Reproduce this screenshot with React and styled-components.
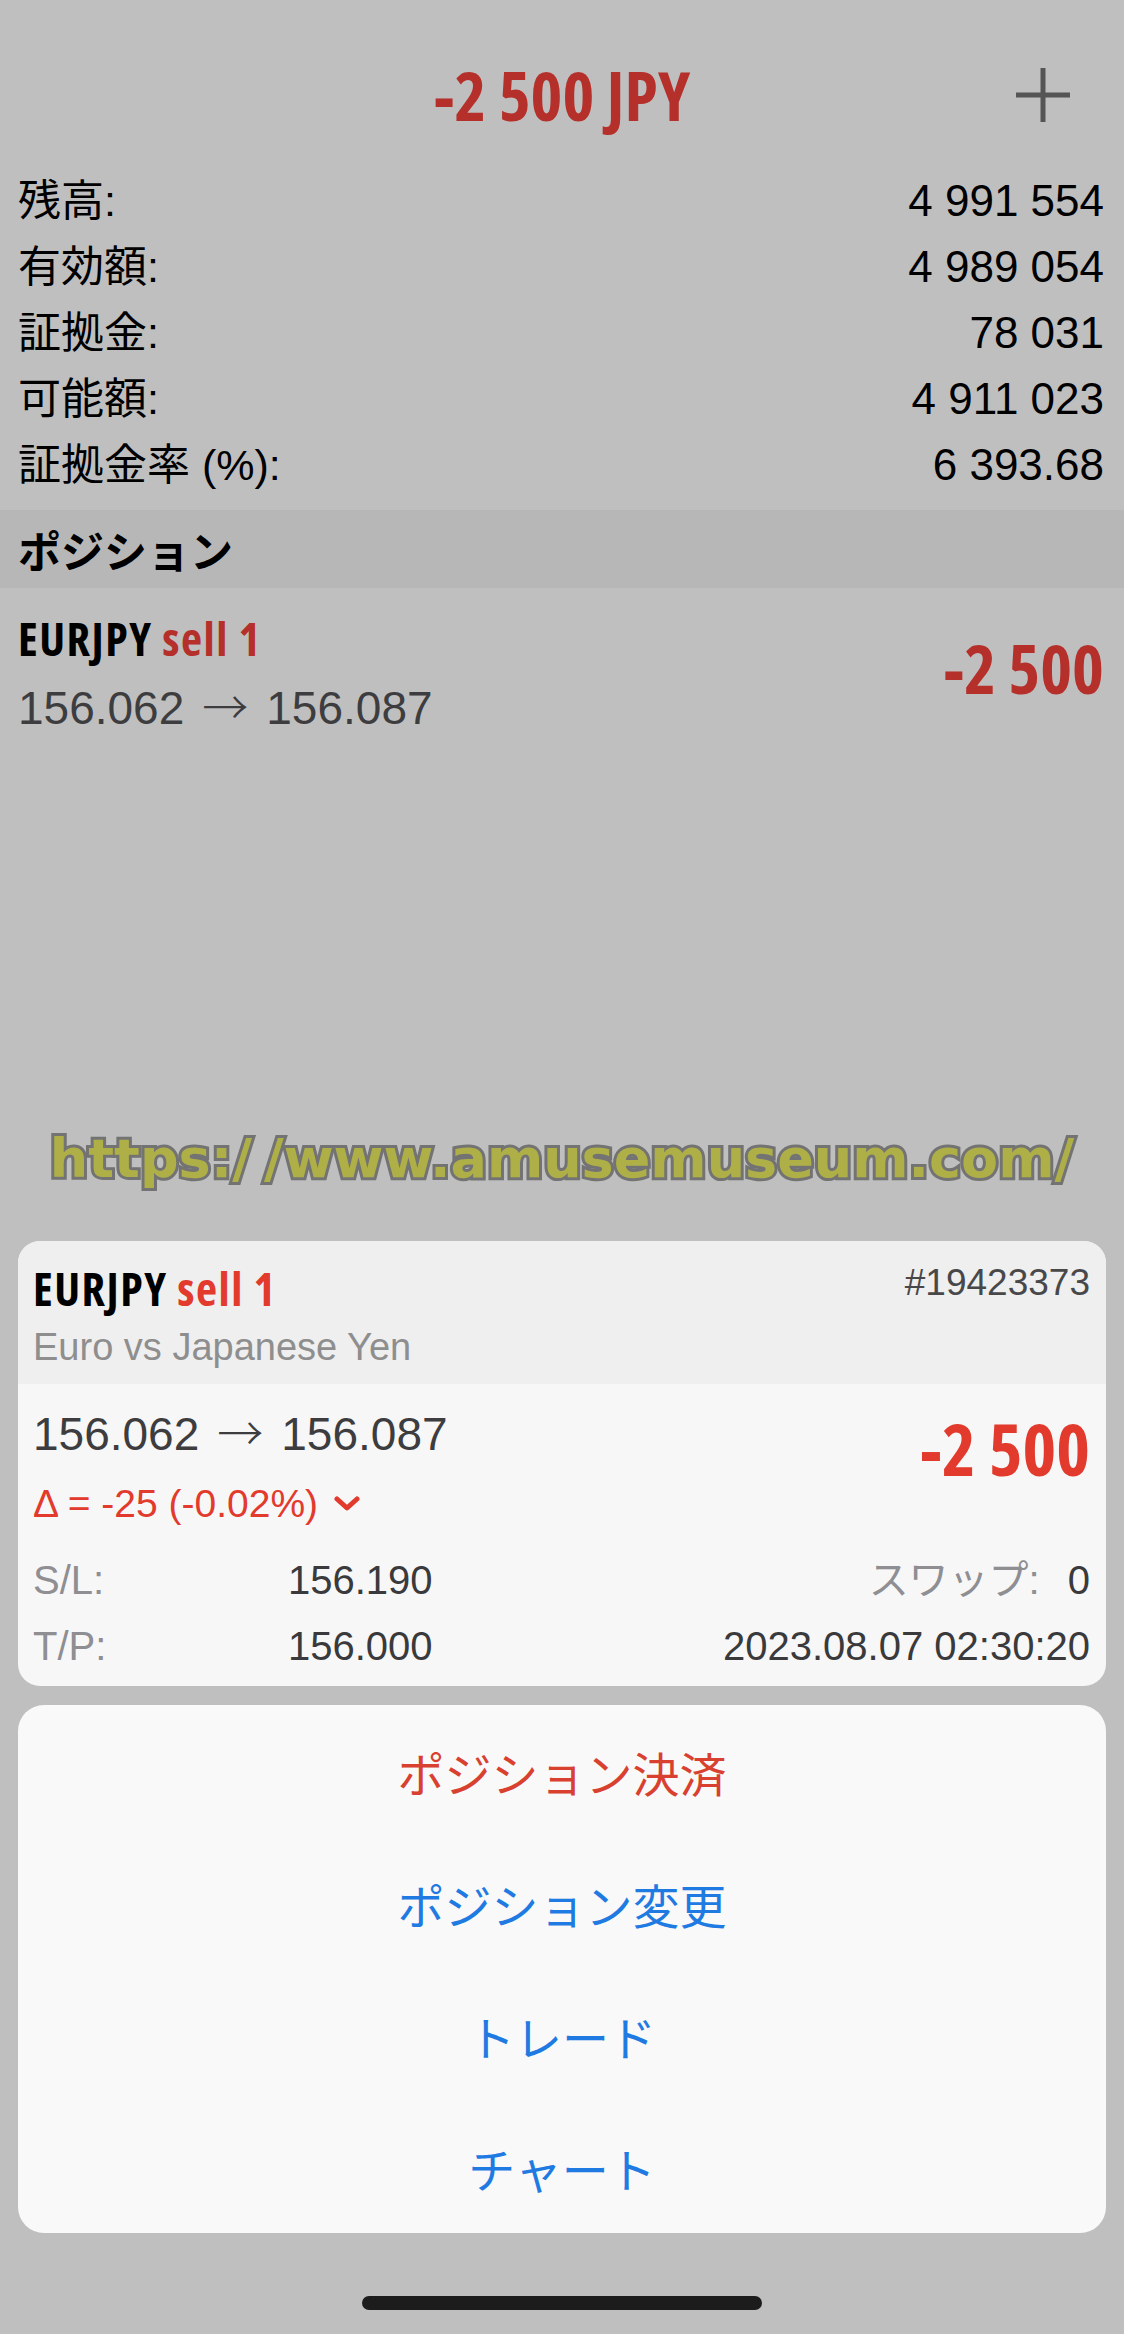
import React from "react";
import styled, { createGlobalStyle } from "styled-components";

const GlobalStyle = createGlobalStyle`
  html, body {
    margin: 0;
    padding: 0;
    background: #bfbfbf;
  }
  body {
    font-family: "Liberation Sans", Arial, sans-serif;
    color: #000;
  }
`;

// Open Sans ships a condensed face here, picked through font-stretch
const condensed = `"Open Sans", "Liberation Sans", sans-serif`;
const cjk = `"Liberation Sans", "Noto Sans CJK JP", sans-serif`;

const summary = [
  ["残高:", "4 991 554"],
  ["有効額:", "4 989 054"],
  ["証拠金:", "78 031"],
  ["可能額:", "4 911 023"],
  ["証拠金率 (%):", "6 393.68"],
];

const actions = [
  { label: "ポジション決済", danger: true },
  { label: "ポジション変更" },
  { label: "トレード" },
  { label: "チャート" },
];

const App = () => {
  return (
    <>
      <GlobalStyle />
      <Page>
        <Main>
          <TitleBar>
            <span />
            <Title>-2 500 JPY</Title>
            <PlusButton aria-label="add">
              <svg width="54" height="54" viewBox="0 0 54 54">
                <line x1="27" y1="0" x2="27" y2="54" stroke="#555" strokeWidth="5" />
                <line x1="0" y1="27" x2="54" y2="27" stroke="#555" strokeWidth="5" />
              </svg>
            </PlusButton>
          </TitleBar>

          <Summary>
            {summary.map(([label, value]) => (
              <SummaryRow key={label}>
                <SummaryLabel>{label}</SummaryLabel>
                <SummaryValue>{value}</SummaryValue>
              </SummaryRow>
            ))}
          </Summary>

          <SectionHeader>ポジション</SectionHeader>

          <PositionRow>
            <div>
              <Symbol>
                EURJPY <Side $dim>sell 1</Side>
              </Symbol>
              <Prices $top={13}>
                156.062<Arrow>→</Arrow>156.087
              </Prices>
            </div>
            <Profit $size={68} $top={21} $dim>-2 500</Profit>
          </PositionRow>
        </Main>

        <Watermark>https:/<Gap>/</Gap>www.amusemuseum.com/</Watermark>

        <Card>
          <CardHeader>
            <HeaderLine>
              <Symbol>
                EURJPY <Side>sell 1</Side>
              </Symbol>
              <Ticket>#19423373</Ticket>
            </HeaderLine>
            <Description>Euro vs Japanese Yen</Description>
          </CardHeader>

          <CardBody>
            <TopBlock>
              <div>
                <Prices $top={0}>
                  156.062<Arrow>→</Arrow>156.087
                </Prices>
                <Delta>
                  Δ = -25 (-0.02%)
                  <svg width="26" height="16" viewBox="0 0 26 16">
                    <path d="M3 3 L13 12 L23 3" fill="none" stroke="#e23a2c" strokeWidth="5" strokeLinecap="round" strokeLinejoin="round" />
                  </svg>
                </Delta>
              </div>
              <Profit $size={72} $top={10}>-2 500</Profit>
            </TopBlock>

            <Details>
              <DetailLabel>S/L:</DetailLabel>
              <DetailValue>156.190</DetailValue>
              <DetailRight>
                <DetailLabel>スワップ:</DetailLabel>
                <DetailValue>0</DetailValue>
              </DetailRight>
              <DetailLabel>T/P:</DetailLabel>
              <DetailValue>156.000</DetailValue>
              <DetailRight>
                <DetailValue>2023.08.07 02:30:20</DetailValue>
              </DetailRight>
            </Details>
          </CardBody>
        </Card>

        <ActionSheet>
          {actions.map((a) => (
            <ActionButton key={a.label} $danger={a.danger}>
              {a.label}
            </ActionButton>
          ))}
        </ActionSheet>

        <HomeBar>
          <HomeIndicator />
        </HomeBar>
      </Page>
    </>
  );
};

const Page = styled.div`
  position: relative;
  width: 1124px;
  min-height: 2334px;
  display: flex;
  flex-direction: column;
  background: #bfbfbf;
  overflow: hidden;
`;

const Main = styled.div`
  flex: 1;
`;

const TitleBar = styled.header`
  display: grid;
  grid-template-columns: 1fr auto 1fr;
  align-items: center;
  padding-top: 61px;
  height: 67px;
`;

const Title = styled.h1`
  margin: 0;
  font-family: ${condensed};
  font-stretch: 75%;
  font-weight: 700;
  font-size: 68px;
  line-height: 67px;
  color: #b5302a;
  white-space: nowrap;
`;

const PlusButton = styled.div`
  justify-self: end;
  margin-right: 54px;
  width: 54px;
  height: 54px;
  display: flex;
`;

const Summary = styled.section`
  padding: 40px 18px 12px 18px;
`;

const SummaryRow = styled.div`
  display: flex;
  justify-content: space-between;
  align-items: center;
  height: 66px;
`;

const SummaryLabel = styled.span`
  font-family: ${cjk};
  font-size: 43px;
  line-height: 1;
  color: #000;
`;

const SummaryValue = styled.span`
  font-size: 44px;
  line-height: 1;
  color: #000;
  padding-right: 2px;
`;

const SectionHeader = styled.div`
  height: 78px;
  display: flex;
  align-items: center;
  padding: 0 18px;
  background: #b7b7b7;
  font-family: "Noto Sans CJK JP", sans-serif;
  font-weight: 700;
  font-size: 43px;
  color: #000;
`;

const PositionRow = styled.div`
  display: flex;
  justify-content: space-between;
  align-items: flex-start;
  padding: 25px 20px 0 18px;
`;

const Symbol = styled.div`
  font-family: ${condensed};
  font-stretch: 75%;
  font-weight: 700;
  font-size: 46px;
  line-height: 50px;
  letter-spacing: 1.5px;
  color: #000;
  white-space: nowrap;
`;

const Side = styled.span`
  color: ${(p) => (p.$dim ? "#b5302a" : "#e23a2c")};
`;

const Prices = styled.div`
  margin-top: ${(p) => p.$top}px;
  font-size: 46px;
  line-height: 56px;
  color: #3d3d40;
  white-space: nowrap;
`;

const Arrow = styled.span`
  margin: 0 18px;
  font-family: "Noto Sans CJK JP", sans-serif;
  font-weight: 300;
`;

const Profit = styled.div`
  margin-top: ${(p) => p.$top}px;
  font-family: ${condensed};
  font-stretch: 75%;
  font-weight: 700;
  font-size: ${(p) => p.$size}px;
  line-height: ${(p) => p.$size}px;
  color: ${(p) => (p.$dim ? "#b5302a" : "#e23a2c")};
  white-space: nowrap;
`;

const Watermark = styled.div`
  position: absolute;
  top: 1132px;
  left: 0;
  right: 0;
  text-align: center;
  font-family: "DejaVu Sans", Verdana, sans-serif;
  font-weight: 700;
  font-size: 54px;
  line-height: 1;
  color: #afaf48;
  -webkit-text-stroke: 6px #737373;
  paint-order: stroke fill;
  white-space: nowrap;
  pointer-events: none;
`;

const Gap = styled.span`
  margin-left: 12px;
`;

const Card = styled.section`
  margin: 0 18px;
  border-radius: 22px;
  overflow: hidden;
  background: #f7f7f7;
`;

const CardHeader = styled.div`
  box-sizing: border-box;
  height: 143px;
  padding: 22px 16px 0 15px;
  background: #efefef;
`;

const HeaderLine = styled.div`
  display: flex;
  justify-content: space-between;
  align-items: flex-start;
`;

const Ticket = styled.div`
  font-size: 37px;
  line-height: 40px;
  color: #48484a;
`;

const Description = styled.div`
  margin-top: 11px;
  font-size: 38px;
  line-height: 46px;
  color: #8e8e8e;
`;

const CardBody = styled.div`
  padding: 18px 16px 7px 15px;
`;

const TopBlock = styled.div`
  display: flex;
  justify-content: space-between;
  align-items: flex-start;
`;

const Delta = styled.div`
  margin-top: 20px;
  display: flex;
  align-items: center;
  gap: 16px;
  font-size: 39px;
  line-height: 44px;
  color: #e23a2c;
`;

const Details = styled.div`
  margin-top: 21px;
  display: grid;
  grid-template-columns: 255px 1fr auto;
  grid-auto-rows: 66px;
  align-items: center;
  font-size: 40px;
  line-height: 50px;
`;

const DetailLabel = styled.span`
  font-family: ${cjk};
  color: #8e8e93;
`;

const DetailValue = styled.span`
  color: #3a3a3c;
  white-space: nowrap;
`;

const DetailRight = styled.div`
  display: flex;
  justify-content: flex-end;
  align-items: center;
  gap: 28px;
`;

const ActionSheet = styled.nav`
  margin: 19px 18px 0;
  border-radius: 26px;
  background: #f9f9f9;
  display: flex;
  flex-direction: column;
`;

const ActionButton = styled.div`
  height: 132px;
  display: flex;
  align-items: center;
  justify-content: center;
  font-family: "Noto Sans CJK JP", sans-serif;
  font-size: 47px;
  font-weight: 400;
  color: ${(p) => (p.$danger ? "#d8412f" : "#1f7be2")};
`;

const HomeBar = styled.div`
  display: flex;
  justify-content: center;
  padding: 63px 0 24px;
`;

const HomeIndicator = styled.div`
  width: 400px;
  height: 14px;
  border-radius: 7px;
  background: #1c1c1c;
`;

export default App;
